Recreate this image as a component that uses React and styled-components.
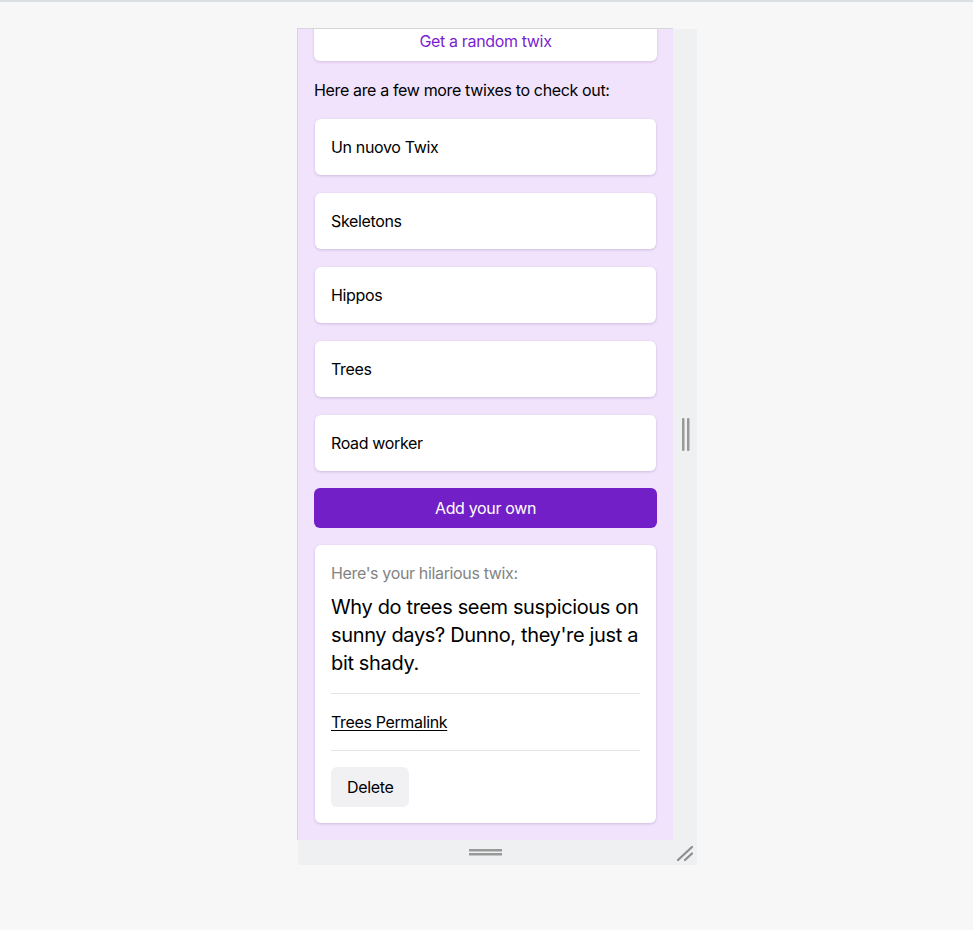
import React, { useLayoutEffect, useRef } from 'react';
import styled, { createGlobalStyle } from 'styled-components';

const GlobalStyle = createGlobalStyle`
  html, body {
    margin: 0;
    background: #f6f7f6;
  }
  body {
    border-top: 2px solid #dcdfe1;
    font-family: Inter, "Noto Sans", "Liberation Sans", sans-serif;
    letter-spacing: -0.022em;
    color: #000;
  }
`;

const Stage = styled.div`
  padding: 26px 0 0 297px;
`;

const Frame = styled.div`
  display: grid;
  grid-template-columns: 376px 24px;
  grid-template-rows: 812px 25px;
  width: 400px;
`;

const Preview = styled.div`
  border-left: 1px solid #d6d6da;
  border-top: 1px solid #d6d6da;
  background: #f2e3fd;
  overflow-y: auto;
  scrollbar-width: none;
  &::-webkit-scrollbar { display: none; }
`;

const Gutter = styled.div`
  margin-top: 1px;
  background: #eff0f1;
  display: flex;
  align-items: center;
  justify-content: center;
`;

const BottomBar = styled.div`
  grid-column: 1 / 3;
  margin-left: 1px;
  background: #eff0f1;
  display: grid;
  grid-template-columns: 375px 24px;
  align-items: center;
`;

const Centered = styled.div`
  display: flex;
  justify-content: center;
  align-items: center;
`;

const Content = styled.div`
  display: flex;
  flex-direction: column;
  gap: 17px;
  padding: 16px 16px 17px;
`;

const Button = styled.button`
  height: 40px;
  width: 100%;
  border: none;
  border-radius: 6px;
  font-family: inherit;
  letter-spacing: inherit;
  font-size: 16px;
  cursor: pointer;
  background: ${p => (p.$primary ? '#731fc7' : '#fff')};
  color: ${p => (p.$primary ? '#fff' : '#7a1fd0')};
  box-shadow: ${p => (p.$primary ? 'none' : '0 1px 3px rgba(60, 30, 90, 0.18)')};
`;

const Intro = styled.p`
  margin: 0;
  font-size: 16px;
  line-height: 24px;
`;

const List = styled.div`
  display: flex;
  flex-direction: column;
  gap: 18px;
`;

const Card = styled.div`
  background: #fff;
  border-radius: 6px;
  margin: 0 1px;
  box-shadow: 0 1px 3px rgba(60, 30, 90, 0.2);
`;

const ListItem = styled(Card)`
  height: 56px;
  padding: 0 16px;
  display: flex;
  align-items: center;
  font-size: 16px;
`;

const TwixCard = styled(Card)`
  padding: 16px;
`;

const Label = styled.div`
  color: #838383;
  font-size: 16px;
  line-height: 24px;
`;

const Joke = styled.p`
  margin: 8px 0 0;
  font-size: 20px;
  line-height: 28px;
`;

const Divider = styled.hr`
  border: none;
  border-top: 1px solid #e3e3e8;
  margin: 16px 0;
`;

const Permalink = styled.a`
  display: block;
  font-size: 16px;
  line-height: 24px;
  color: #000;
  text-decoration: underline;
  text-underline-offset: 2px;
`;

const GhostButton = styled.button`
  height: 40px;
  padding: 0 16px;
  border: none;
  border-radius: 6px;
  background: #f1f1f4;
  font-family: inherit;
  letter-spacing: inherit;
  font-size: 16px;
  color: #000;
`;

const twixes = ['Un nuovo Twix', 'Skeletons', 'Hippos', 'Trees', 'Road worker'];

export default function App() {
  const scroller = useRef(null);

  useLayoutEffect(() => {
    if (scroller.current) scroller.current.scrollTop = 24;
  }, []);

  return (
    <>
      <GlobalStyle />
      <Stage>
        <Frame>
          <Preview ref={scroller}>
            <Content>
              <Button>Get a random twix</Button>
              <Intro>Here are a few more twixes to check out:</Intro>
              <List>
                {twixes.map(t => (
                  <ListItem key={t}>{t}</ListItem>
                ))}
              </List>
              <Button $primary>Add your own</Button>
              <TwixCard>
                <Label>Here's your hilarious twix:</Label>
                <Joke>
                  Why do trees seem suspicious on sunny days? Dunno, they're just a bit shady.
                </Joke>
                <Divider />
                <Permalink href="#">Trees Permalink</Permalink>
                <Divider />
                <GhostButton>Delete</GhostButton>
              </TwixCard>
            </Content>
          </Preview>
          <Gutter>
            <svg width="9" height="33" viewBox="0 0 9 33">
              <rect x="1" y="0" width="2.5" height="33" rx="1" fill="#999" />
              <rect x="6" y="0" width="2.5" height="33" rx="1" fill="#999" />
            </svg>
          </Gutter>
          <BottomBar>
            <Centered>
              <svg width="33" height="7" viewBox="0 0 33 7">
                <rect x="0" y="0" width="33" height="2.5" fill="#999" />
                <rect x="0" y="4" width="33" height="2.5" fill="#999" />
              </svg>
            </Centered>
            <Centered>
              <svg width="18" height="18" viewBox="0 0 18 18">
                <path d="M2 16 L16 3 M9 16 L16 9.5" stroke="#8d8d8d" strokeWidth="2.2" strokeLinecap="round" />
              </svg>
            </Centered>
          </BottomBar>
        </Frame>
      </Stage>
    </>
  );
}
